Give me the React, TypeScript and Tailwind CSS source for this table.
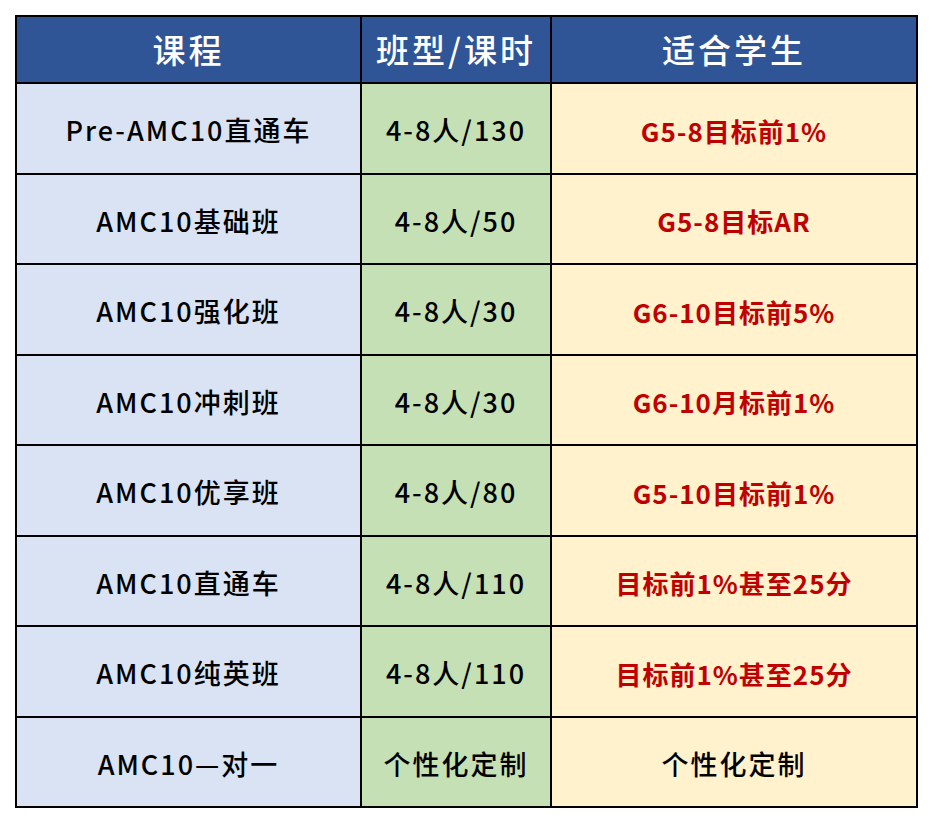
const rows: [string, string, string, boolean][] = [
  ["Pre-AMC10直通车", "4-8人/130", "G5-8目标前1%", true],
  ["AMC10基础班", "4-8人/50", "G5-8目标AR", true],
  ["AMC10强化班", "4-8人/30", "G6-10目标前5%", true],
  ["AMC10冲刺班", "4-8人/30", "G6-10月标前1%", true],
  ["AMC10优享班", "4-8人/80", "G5-10目标前1%", true],
  ["AMC10直通车", "4-8人/110", "目标前1%甚至25分", true],
  ["AMC10纯英班", "4-8人/110", "目标前1%甚至25分", true],
  ["AMC10—对一", "个性化定制", "个性化定制", false],
];

export default function App() {
  return (
    <div
      className="w-[932px] h-[822px] bg-white pt-[15px] pl-[15px]"
      style={{ fontFamily: '"Noto Sans CJK SC", "Noto Sans", sans-serif' }}
    >
      <table className="border-collapse border-2 border-black w-[901px] table-fixed">
        <colgroup>
          <col className="w-[345px]" />
          <col className="w-[190px]" />
          <col className="w-[366px]" />
        </colgroup>
        <thead>
          <tr className="h-[67px] bg-[#2f5597] text-white text-[33px] font-medium tracking-[3px]">
            <th className="border-2 border-black font-medium">课程</th>
            <th className="border-2 border-black font-medium">班型/课时</th>
            <th className="border-2 border-black font-medium">适合学生</th>
          </tr>
        </thead>
        <tbody>
          {rows.map(([course, size, fit, red], i) => (
            <tr key={i} className="h-[90.5px] text-[27px]">
              <td className="border-2 border-black bg-[#dae3f3] pt-1 text-center text-black font-medium tracking-[2px]">
                {course}
              </td>
              <td className="border-2 border-black bg-[#c5e0b4] pt-1 text-center text-black font-medium tracking-[2px]">
                {size}
              </td>
              <td
                className={`border-2 border-black bg-[#fff2cc] pt-1 text-center ${
                  red ? "text-[#c00000] font-bold text-[26px] tracking-[1px]" : "text-black font-medium tracking-[2px]"
                }`}
              >
                {fit}
              </td>
            </tr>
          ))}
        </tbody>
      </table>
    </div>
  );
}
